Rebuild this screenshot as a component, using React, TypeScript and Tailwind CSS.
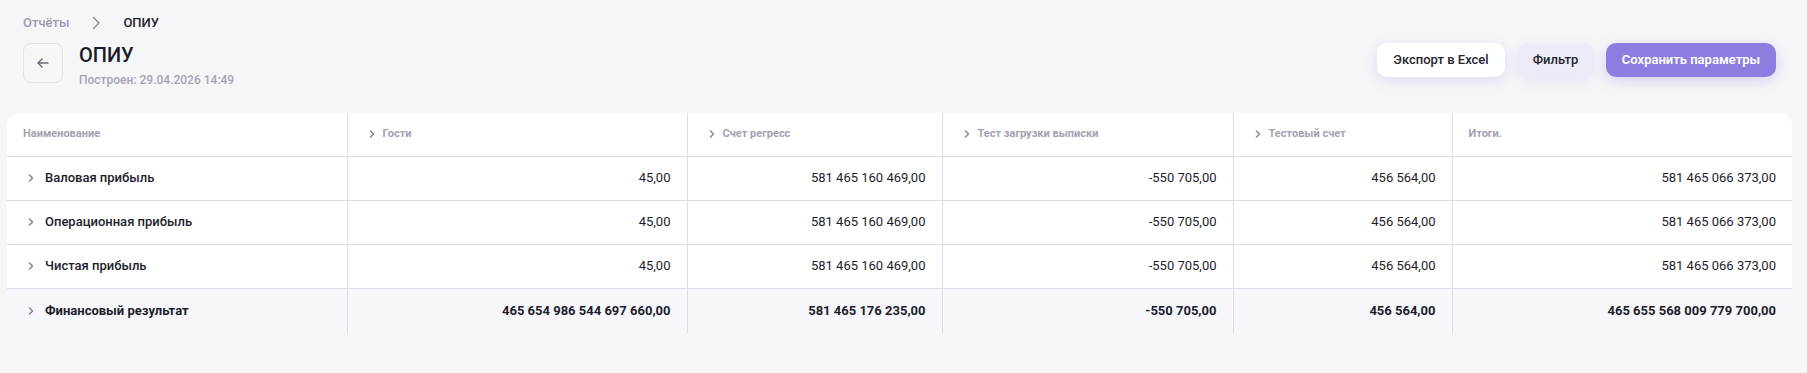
import React from 'react';

const cols = ['Гости', 'Счет регресс', 'Тест загрузки выписки', 'Тестовый счет'];

const rows = [
  { name: 'Валовая прибыль', values: ['45,00', '581 465 160 469,00', '-550 705,00', '456 564,00', '581 465 066 373,00'] },
  { name: 'Операционная прибыль', values: ['45,00', '581 465 160 469,00', '-550 705,00', '456 564,00', '581 465 066 373,00'] },
  { name: 'Чистая прибыль', values: ['45,00', '581 465 160 469,00', '-550 705,00', '456 564,00', '581 465 066 373,00'] },
];

const total = {
  name: 'Финансовый результат',
  values: ['465 654 986 544 697 660,00', '581 465 176 235,00', '-550 705,00', '456 564,00', '465 655 568 009 779 700,00'],
};

function Chevron({ className = '' }: { className?: string }) {
  return (
    <svg viewBox="0 0 16 16" className={className} fill="none" stroke="currentColor" strokeWidth="1.6" strokeLinecap="round" strokeLinejoin="round">
      <path d="M6.5 5l3 3-3 3" />
    </svg>
  );
}

export default function App() {
  return (
    <div className="min-h-[373px] bg-[#f5f6f8] px-[7px] pt-[14px] font-['Roboto',sans-serif] text-[#1d1d2b]">
      {/* Breadcrumb */}
      <div className="flex items-center pl-4 text-[13px] leading-[18px] font-medium">
        <span className="text-[#9c9aab]">Отчёты</span>
        <svg viewBox="0 0 16 16" className="w-4 h-4 mx-[19px] text-[#8e8c9c]" fill="none" stroke="currentColor" strokeWidth="1.4" strokeLinecap="round" strokeLinejoin="round">
          <path d="M5.5 2.5l5.5 5.5-5.5 5.5" />
        </svg>
        <span className="text-[#24232f]">ОПИУ</span>
      </div>

      {/* Header */}
      <div className="flex items-start justify-between pl-4 pr-[24px] mt-[11px]">
        <div className="flex items-start gap-4">
          <button className="w-10 h-10 rounded-lg border border-[#e2e1ec] bg-[#f6f6f9] flex items-center justify-center text-[#6c6b78]">
            <svg viewBox="0 0 16 16" className="w-4 h-4" fill="none" stroke="currentColor" strokeWidth="1.4" strokeLinecap="round" strokeLinejoin="round">
              <path d="M13 8H3M7 4L3 8l4 4" />
            </svg>
          </button>
          <div>
            <h1 className="text-[20px] leading-6 font-medium text-[#1b1a26]">ОПИУ</h1>
            <p className="mt-[5px] text-[12px] leading-4 font-medium text-[#a6a4b4]">Построен: 29.04.2026 14:49</p>
          </div>
        </div>
        <div className="flex items-center gap-3">
          <button className="h-[34px] w-[128px] rounded-[10px] bg-white text-[13px] font-medium text-[#262532] shadow-[0_4px_14px_rgba(120,105,220,0.18)]">
            Экспорт в Excel
          </button>
          <button className="h-[34px] w-[77px] rounded-[10px] bg-[#ecebf7] text-[13px] font-medium text-[#262532] shadow-[0_4px_14px_rgba(120,105,220,0.12)]">
            Фильтр
          </button>
          <button className="h-[34px] w-[170px] rounded-[10px] bg-[#8b7ee0] text-[13px] font-semibold text-white shadow-[0_4px_14px_rgba(120,105,220,0.25)]">
            Сохранить параметры
          </button>
        </div>
      </div>

      {/* Table */}
      <div className="mt-[25px] w-[1785px] rounded-t-xl bg-white overflow-hidden">
        <table className="table-fixed w-full border-collapse">
          <colgroup>
            <col className="w-[340px]" />
            <col className="w-[340px]" />
            <col className="w-[255px]" />
            <col className="w-[291px]" />
            <col className="w-[219px]" />
            <col className="w-[340px]" />
          </colgroup>
          <thead>
            <tr className="h-[43px] border-b border-[#dedcec] text-[11px] font-bold text-[#a3a1b1]">
              <th className="pl-4 text-left font-bold">Наименование</th>
              {cols.map((c) => (
                <th key={c} className="pl-4 text-left font-bold border-l border-[#dedcec]">
                  <div className="flex items-center gap-[3px]">
                    <Chevron className="w-4 h-4 text-[#8f8d9f]" />
                    <span>{c}</span>
                  </div>
                </th>
              ))}
              <th className="pl-4 text-left font-bold border-l border-[#dedcec]">Итоги.</th>
            </tr>
          </thead>
          <tbody>
            {rows.map((r) => (
              <tr key={r.name} className="h-[44px] border-b border-[#dedcec] text-[13px]">
                <td className="pl-4">
                  <div className="flex items-center gap-[6px] font-medium">
                    <Chevron className="w-4 h-4 text-[#8a889a]" />
                    <span>{r.name}</span>
                  </div>
                </td>
                {r.values.map((v, i) => (
                  <td key={i} className="pr-4 text-right border-l border-[#dedcec]">{v}</td>
                ))}
              </tr>
            ))}
            <tr className="h-[45px] bg-[#f7f7fb] text-[13px] font-bold">
              <td className="pl-4">
                <div className="flex items-center gap-[6px]">
                  <Chevron className="w-4 h-4 text-[#8a889a]" />
                  <span>{total.name}</span>
                </div>
              </td>
              {total.values.map((v, i) => (
                <td key={i} className="pr-4 text-right border-l border-[#dedcec]">{v}</td>
              ))}
            </tr>
          </tbody>
        </table>
      </div>
    </div>
  );
}
